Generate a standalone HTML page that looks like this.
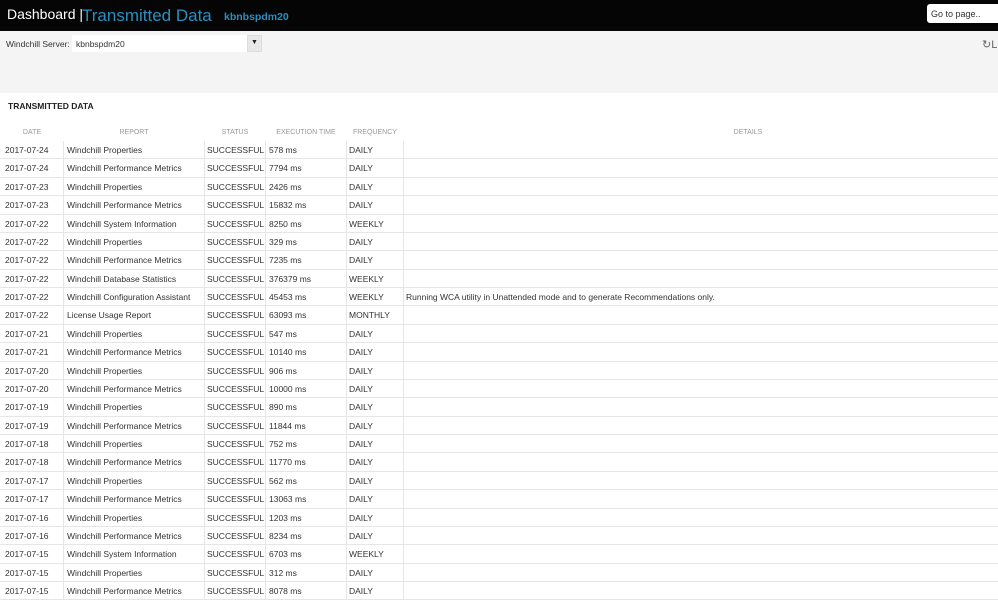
<!DOCTYPE html>
<html><head><style>
*{margin:0;padding:0;box-sizing:border-box}
body{width:998px;height:600px;overflow:hidden;background:#fff;font-family:"Liberation Sans",sans-serif;color:#333;position:relative}
.hdr{position:absolute;left:0;top:0;width:998px;height:31px;background:#050505}
.hdr .d{position:absolute;left:7px;top:6px;color:#fff;font-size:14px}
.hdr .t{position:absolute;left:82px;top:6px;color:#2a8fc0;font-size:17px}
.hdr .s{position:absolute;left:224px;top:11px;color:#2a8fc0;font-size:10.5px;font-weight:bold}
.hdr .g{position:absolute;left:927px;top:4px;width:80px;height:19px;background:#fff;border-radius:3px;font-size:9px;color:#333;padding:5px 4px}
.bar{position:absolute;left:0;top:31px;width:998px;height:62px;background:#f4f4f4}
.bar .l{position:absolute;left:6px;top:8px;font-size:8.5px}
.bar .sel{position:absolute;left:72px;top:4px;width:190px;height:17px;background:#fff;font-size:8.5px;padding:4px 4px}
.bar .arr{position:absolute;left:247px;top:4px;width:15px;height:17px;background:#e8e8e8;border:1px solid #ddd;font-size:7px;text-align:center;padding-top:3px;color:#222}
.bar .r{position:absolute;left:982px;top:7px;font-size:11px;color:#666}
h2{position:absolute;left:8px;top:101px;font-size:8.5px;font-weight:bold;color:#222}
.th{position:absolute;top:128px;font-size:7px;color:#999;text-align:center}
.rows{position:absolute;left:0;top:141px;width:998px}
.row{height:18.375px;border-bottom:1px solid #e6e6e6;position:relative;font-size:8.5px;color:#333}
.row span{position:absolute;top:4px}
.row i{position:absolute;top:0;height:100%;border-left:1px solid #e6e6e6}
</style></head><body>
<div class="hdr"><div class="d">Dashboard |</div><div class="t">Transmitted Data</div><div class="s">kbnbspdm20</div><div class="g">Go to page..</div></div>
<div class="bar"><div class="l">Windchill Server:</div><div class="sel">kbnbspdm20</div><div class="arr">▼</div><div class="r">↻L</div></div>
<h2>TRANSMITTED DATA</h2>
<div class="th" style="left:0;width:64px;top:129px">DATE</div>
<div class="th" style="left:64px;width:140px;top:129px">REPORT</div>
<div class="th" style="left:204px;width:62px;top:129px">STATUS</div>
<div class="th" style="left:266px;width:80px;top:129px">EXECUTION TIME</div>
<div class="th" style="left:346px;width:58px;top:129px">FREQUENCY</div>
<div class="th" style="left:404px;width:688px;top:129px">DETAILS</div>
<div class="rows" id="r"></div>
<script>
var d=[["2017-07-24","Windchill Properties","578 ms","DAILY"],["2017-07-24","Windchill Performance Metrics","7794 ms","DAILY"],["2017-07-23","Windchill Properties","2426 ms","DAILY"],["2017-07-23","Windchill Performance Metrics","15832 ms","DAILY"],["2017-07-22","Windchill System Information","8250 ms","WEEKLY"],["2017-07-22","Windchill Properties","329 ms","DAILY"],["2017-07-22","Windchill Performance Metrics","7235 ms","DAILY"],["2017-07-22","Windchill Database Statistics","376379 ms","WEEKLY"],["2017-07-22","Windchill Configuration Assistant","45453 ms","WEEKLY","Running WCA utility in Unattended mode and to generate Recommendations only."],["2017-07-22","License Usage Report","63093 ms","MONTHLY"],["2017-07-21","Windchill Properties","547 ms","DAILY"],["2017-07-21","Windchill Performance Metrics","10140 ms","DAILY"],["2017-07-20","Windchill Properties","906 ms","DAILY"],["2017-07-20","Windchill Performance Metrics","10000 ms","DAILY"],["2017-07-19","Windchill Properties","890 ms","DAILY"],["2017-07-19","Windchill Performance Metrics","11844 ms","DAILY"],["2017-07-18","Windchill Properties","752 ms","DAILY"],["2017-07-18","Windchill Performance Metrics","11770 ms","DAILY"],["2017-07-17","Windchill Properties","562 ms","DAILY"],["2017-07-17","Windchill Performance Metrics","13063 ms","DAILY"],["2017-07-16","Windchill Properties","1203 ms","DAILY"],["2017-07-16","Windchill Performance Metrics","8234 ms","DAILY"],["2017-07-15","Windchill System Information","6703 ms","WEEKLY"],["2017-07-15","Windchill Properties","312 ms","DAILY"],["2017-07-15","Windchill Performance Metrics","8078 ms","DAILY"]];
var h="";d.forEach(function(r){h+='<div class="row"><span style="left:5px">'+r[0]+'</span><i style="left:63px"></i><span style="left:67px">'+r[1]+'</span><i style="left:204px"></i><span style="left:207px">SUCCESSFUL</span><i style="left:265px"></i><span style="left:269px">'+r[2]+'</span><i style="left:346px"></i><span style="left:349px">'+r[3]+'</span><i style="left:403px"></i><span style="left:406px">'+(r[4]||"")+'</span></div>';});
document.getElementById("r").innerHTML=h;
</script>
</body></html>
